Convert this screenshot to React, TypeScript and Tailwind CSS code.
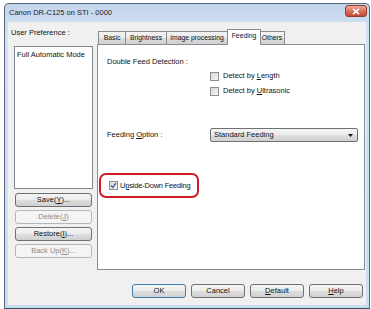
import type { ReactNode } from "react";

const btnFace =
  "bg-[linear-gradient(#f4f4f4,#ececec_48%,#dedede_52%,#d0d0d0)] border-[#707070] text-[#111]";
const btnDisabled = "bg-[#f4f4f4] border-[#b3b7ba] text-[#8d8d8d]";

function Button({
  children,
  disabled,
  primary,
  className = "",
}: {
  children: ReactNode;
  disabled?: boolean;
  primary?: boolean;
  className?: string;
}) {
  return (
    <div
      className={`flex h-[14px] items-center justify-center rounded-[3px] border ${
        disabled ? btnDisabled : primary ? `${btnFace} !border-[#3c7fb1]` : btnFace
      } ${className}`}
    >
      <span className="leading-none">{children}</span>
    </div>
  );
}

function Checkbox({
  checked,
  label,
  tight,
}: {
  checked?: boolean;
  label: ReactNode;
  tight?: boolean;
}) {
  return (
    <div className={`flex h-[10px] items-center ${tight ? "gap-[2px]" : "gap-[4px]"}`}>
      <div className="flex h-[9px] w-[9px] shrink-0 items-center justify-center border border-[#8f8f8f] bg-[linear-gradient(135deg,#d8d8d8,#f6f6f6)]">
        {checked ? (
          <svg width="7" height="7" viewBox="0 0 7 7">
            <path d="M1 3.6 L2.8 5.4 L6 1.2" fill="none" stroke="#4a5e86" strokeWidth="1.4" />
          </svg>
        ) : null}
      </div>
      <span className={`leading-none ${tight ? "tracking-[-0.2px]" : ""}`}>{label}</span>
    </div>
  );
}

const tabs = [
  { label: "Basic", w: "w-[28px]" },
  { label: "Brightness", w: "w-[42px]" },
  { label: "Image processing", w: "w-[62px]" },
  { label: "Feeding", w: "w-[34px]", active: true },
  { label: "Others", w: "w-[26px]" },
];

export default function App() {
  return (
    <div className="h-[309px] w-[371px] overflow-hidden whitespace-nowrap bg-white pl-[4px] pt-[3px] font-['Liberation_Sans',Arial,sans-serif] text-[7.5px] leading-none text-[#111]">
      <div className="flex h-[306px] w-[366px] flex-col rounded-t-[5px] border border-[#56697f] border-b-[#3c5064] bg-[linear-gradient(#c4d6ec,#d3e1f2_30px,#cddcee)] shadow-[inset_0_-1px_0_#b6e2ea]">
        {/* title bar */}
        <div className="flex h-[18px] items-center justify-between">
          <span className="pl-[4px] text-[#1a1a1a]">Canon DR-C125 on STI - 0000</span>
          <div className="mr-[2px] mt-[1px] flex h-[12px] w-[22px] items-center justify-center self-start rounded-[3px] border border-[#9a3a2c] bg-[linear-gradient(#eeab9b,#d8705a_50%,#c84a33)]">
            <svg width="8" height="7" viewBox="0 0 8 7">
              <path d="M1 0.8 L7 6.2 M7 0.8 L1 6.2" stroke="#fff" strokeWidth="1.6" />
            </svg>
          </div>
        </div>

        {/* client area */}
        <div className="mx-[3px] mb-[3px] flex flex-1 flex-col bg-[#f0f0f0]">
          <div className="flex">
            {/* left column */}
            <div className="ml-[3px] flex w-[83px] flex-col pt-[6px]">
              <div className="flex h-[10px] items-center">User Preference :</div>
              <div className="ml-[3px] mt-[8px] h-[143px] w-[79px] border border-[#828790] bg-white px-[2px] pt-[3px]">
                <div className="flex h-[10px] items-center">Full Automatic Mode</div>
              </div>
              <div className="ml-[4px] mt-[4px] flex w-[77px] flex-col gap-[3px]">
                <Button>
                  Save(<u>Y</u>)...
                </Button>
                <Button disabled>
                  Delete(<u>J</u>)
                </Button>
                <Button>
                  Restore(<u>I</u>)...
                </Button>
                <Button disabled>
                  Back Up(<u>K</u>)...
                </Button>
              </div>
            </div>

            {/* tab control */}
            <div className="ml-[3px] mt-[7px] flex w-[268px] flex-col">
              <div className="flex h-[15px] items-end pl-[1px] text-[6.8px]">
                {tabs.map((t) =>
                  t.active ? (
                    <div
                      key={t.label}
                      className={`relative top-[1px] z-10 -mx-[1px] flex h-[16px] items-center justify-center border border-b-0 border-[#898c95] bg-white pb-[2px] ${t.w}`}
                    >
                      {t.label}
                    </div>
                  ) : (
                    <div
                      key={t.label}
                      className={`-ml-px flex h-[13px] items-center justify-center border border-b-0 border-[#898c95] bg-[linear-gradient(#f2f2f2,#ebebeb_50%,#dddddd_50%,#cfcfcf)] first:ml-0 ${t.w}`}
                    >
                      {t.label}
                    </div>
                  ),
                )}
              </div>
              <div className="flex h-[226px] flex-col border border-[#898c95] bg-white pt-[12px]">
                <div className="flex h-[10px] items-center pl-[9px]">Double Feed Detection :</div>
                <div className="ml-[112px] mt-[4px] flex flex-col gap-[5px]">
                  <Checkbox
                    label={
                      <>
                        Detect by <u>L</u>ength
                      </>
                    }
                  />
                  <Checkbox
                    label={
                      <>
                        Detect by <u>U</u>ltrasonic
                      </>
                    }
                  />
                </div>
                <div className="mt-[32px] flex h-[14px] items-center pl-[9px]">
                  <span className="w-[103px]">
                    Feeding <u>O</u>ption :
                  </span>
                  <div className="flex h-[14px] w-[148px] items-center justify-between rounded-[2px] border border-[#707070] bg-[linear-gradient(#f4f4f4,#ececec_48%,#dedede_52%,#d0d0d0)] pl-[3px] pr-[4px]">
                    <span>Standard Feeding</span>
                    <svg width="5" height="3" viewBox="0 0 5 3">
                      <path d="M0 0 L5 0 L2.5 3 Z" fill="#111" />
                    </svg>
                  </div>
                </div>
                <div className="ml-[1px] mt-[31px] flex h-[25px] w-[100px] items-center rounded-[7px] border-2 border-[#d11c24] pl-[8px]">
                  <Checkbox
                    checked
                    tight
                    label={
                      <>
                        U<u>p</u>side-Down Feeding
                      </>
                    }
                  />
                </div>
              </div>
            </div>
          </div>

          {/* bottom buttons */}
          <div className="mt-[14px] flex justify-end gap-[5px] pr-[3px]">
            <Button primary className="w-[54px]">
              OK
            </Button>
            <Button className="w-[54px]">Cancel</Button>
            <Button className="w-[54px]">
              <u>D</u>efault
            </Button>
            <Button className="w-[54px]">
              <u>H</u>elp
            </Button>
          </div>
        </div>
      </div>
    </div>
  );
}
